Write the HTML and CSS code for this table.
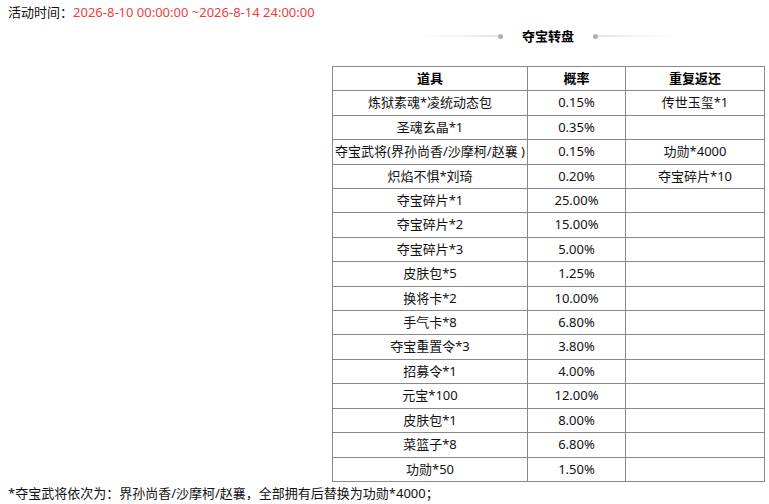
FILE: index.html
```html
<!DOCTYPE html>
<html lang="zh-CN">
<head>
<meta charset="utf-8">
<title>夺宝转盘</title>
<link rel="stylesheet" href="styles.css">
</head>
<body>
<p class="time">活动时间：<span class="time-range">2026-8-10 00:00:00 ~2026-8-14 24:00:00</span></p>
<div class="panel">
  <div class="title">
    <span class="deco deco-left"><i class="line"></i><i class="dot"></i></span>
    <h2 class="title-text">夺宝转盘</h2>
    <span class="deco deco-right"><i class="dot"></i><i class="line"></i></span>
  </div>
  <table class="prize">
    <colgroup><col class="c1"><col class="c2"><col class="c3"></colgroup>
    <thead>
      <tr><th>道具</th><th>概率</th><th>重复返还</th></tr>
    </thead>
    <tbody>
      <tr><td>炼狱素魂*凌统动态包</td><td>0.15%</td><td>传世玉玺*1</td></tr>
      <tr><td>圣魂玄晶*1</td><td>0.35%</td><td></td></tr>
      <tr><td>夺宝武将(界孙尚香/沙摩柯/赵襄 )</td><td>0.15%</td><td>功勋*4000</td></tr>
      <tr><td>炽焰不惧*刘琦</td><td>0.20%</td><td>夺宝碎片*10</td></tr>
      <tr><td>夺宝碎片*1</td><td>25.00%</td><td></td></tr>
      <tr><td>夺宝碎片*2</td><td>15.00%</td><td></td></tr>
      <tr><td>夺宝碎片*3</td><td>5.00%</td><td></td></tr>
      <tr><td>皮肤包*5</td><td>1.25%</td><td></td></tr>
      <tr><td>换将卡*2</td><td>10.00%</td><td></td></tr>
      <tr><td>手气卡*8</td><td>6.80%</td><td></td></tr>
      <tr><td>夺宝重置令*3</td><td>3.80%</td><td></td></tr>
      <tr><td>招募令*1</td><td>4.00%</td><td></td></tr>
      <tr><td>元宝*100</td><td>12.00%</td><td></td></tr>
      <tr><td>皮肤包*1</td><td>8.00%</td><td></td></tr>
      <tr><td>菜篮子*8</td><td>6.80%</td><td></td></tr>
      <tr><td>功勋*50</td><td>1.50%</td><td></td></tr>
    </tbody>
  </table>
</div>
<p class="note">*夺宝武将依次为：界孙尚香/沙摩柯/赵襄，全部拥有后替换为功勋*4000；</p>
</body>
</html>
```

FILE: styles.css
```css
html, body {
  margin: 0;
  padding: 0;
  background: #fff;
}
body {
  padding: 2px 8px 0 8px;
  font-family: "Noto Sans", "Noto Sans CJK SC", sans-serif;
  font-size: 13px;
  color: #111;
}
.time {
  margin: 0;
  line-height: 20px;
  height: 20px;
}
.time-range {
  color: #f03c3c;
}
.panel {
  margin: 4px 0 0 324px;
  width: 432px;
}
.title {
  display: flex;
  align-items: center;
  justify-content: center;
  height: 20px;
  margin-bottom: 20px;
}
.title-text {
  margin: 0 19px;
  font-size: 13px;
  font-weight: bold;
  line-height: 20px;
  color: #000;
}
.deco {
  display: flex;
  align-items: center;
}
.deco .line {
  display: block;
  width: 78px;
  height: 2px;
}
.deco-left .line {
  background: linear-gradient(to right, rgba(230,230,230,0), #e6e6e6);
}
.deco-right .line {
  background: linear-gradient(to left, rgba(230,230,230,0), #e6e6e6);
}
.deco .dot {
  display: block;
  width: 5px;
  height: 5px;
  border-radius: 50%;
  background: #b0b0b0;
}
.prize {
  width: 432px;
  border-collapse: collapse;
  table-layout: fixed;
  border: 1px solid #888;
}
.c1 { width: 195px; }
.c2 { width: 98px; }
.c3 { width: 139px; }
.prize th,
.prize td {
  border: 1px solid #888;
  padding: 0;
  height: 23.4px;
  line-height: 23.4px;
  text-align: center;
  font-weight: normal;
  white-space: nowrap;
  color: #111;
}
.prize th {
  font-weight: bold;
  color: #000;
}
.note {
  margin: 0;
  line-height: 20px;
  padding-top: 1px;
}
```
